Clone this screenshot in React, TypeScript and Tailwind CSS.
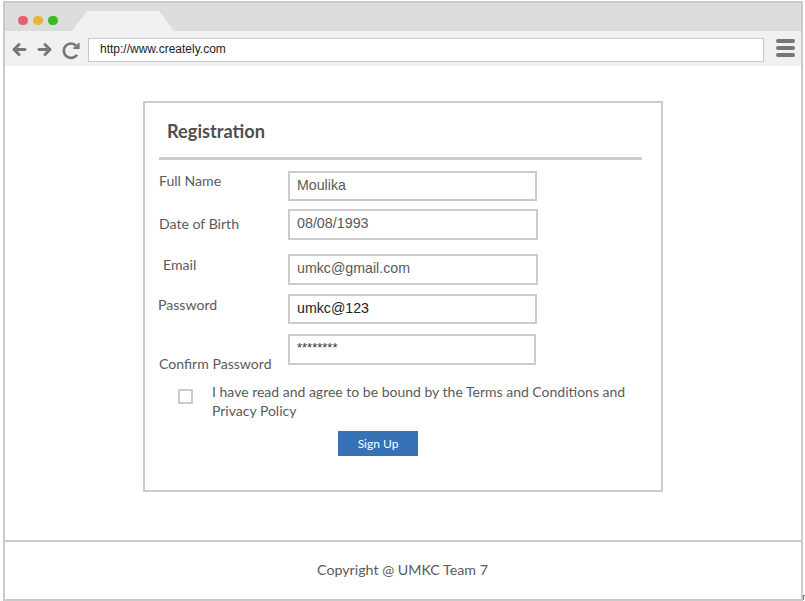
import React from "react";

type FieldProps = {
  label: string;
  value: string;
  type?: string;
  rowClass: string;
  labelClass: string;
  inputClass: string;
};

function Field({ label, value, type = "text", rowClass, labelClass, inputClass }: FieldProps) {
  return (
    <label className={`flex items-start ${rowClass}`}>
      <span className={`shrink-0 text-[14.1px] leading-5 whitespace-nowrap ${labelClass}`}>{label}</span>
      <div className={`shrink-0 border-2 border-[#cbcbcb] bg-white pl-[7px] font-['Liberation_Sans',sans-serif] leading-5 ${inputClass}`}>
        {type === "password" ? "*".repeat(value.length) : value}
      </div>
    </label>
  );
}

function BrowserBar() {
  return (
    <header>
      <div className="flex h-7 bg-[#dcdedb]">
        <div className="flex w-[67px] items-center gap-[5.500px] pt-[7px] pl-[13.300px]">
          <span className="size-[9.500px] rounded-full bg-[#e6616d]" />
          <span className="size-[9.500px] rounded-full bg-[#eab439]" />
          <span className="size-[9.500px] rounded-full bg-[#3cbb20]" />
        </div>
        <svg className="mt-2 h-5 w-[102px]" viewBox="0 0 102 20" fill="#f1f1f1">
          <path d="M0 20 L14.500 0.600 Q15 0 16 0 H86 Q87 0 87.500 0.600 L102 20 Z" />
        </svg>
      </div>
      <div className="flex h-[35px] items-start bg-[#f1f1f1]">
        <svg className="h-[35px] w-[83px] shrink-0" viewBox="0 0 83 35" fill="none" stroke="#777777">
          <g strokeWidth="3" strokeLinecap="round" strokeLinejoin="round">
            <path d="M20 18.500 H9.500 M14 13.500 L9 18.500 L14 23.500" />
            <path d="M34 18.500 H44.500 M40 13.500 L45 18.500 L40 23.500" />
          </g>
          <path d="M71.200 14.700 A7.200 7.200 0 1 0 72 23.700" strokeWidth="2.700" />
          <path d="M74.600 12 V18 H68.300 V16.500 L70.500 15.500 L72.600 13.500 V12 Z" fill="#777777" stroke="none" />
        </svg>
        <div className="mt-[7px] h-6 w-[676px] border border-[#c9c9c9] bg-white pl-[11px] font-['Liberation_Sans',sans-serif] text-[12px] leading-[21px] text-[#222222]">
          http://www.creately.com
        </div>
        <div className="mt-2 ml-3 flex w-[19px] flex-col gap-[3px]">
          <span className="h-1 rounded-full bg-[#777777]" />
          <span className="h-1 rounded-full bg-[#777777]" />
          <span className="h-1 rounded-full bg-[#777777]" />
        </div>
      </div>
    </header>
  );
}

export default function App() {
  return (
    <div className="flex h-[601px] w-[805px] items-end overflow-hidden bg-white pl-[3px] font-['Lato',sans-serif] text-[#5a5a5a]">
      <div className="flex h-[600px] w-[800px] shrink-0 flex-col border-2 border-[#cbcbcb]">
        <BrowserBar />
        <main className="h-[474px] pt-[35px] pl-[138px]">
          <form className="h-[391px] w-[520px] border-2 border-[#cbcbcb]">
            <h1 className="pt-4 pl-[22px] text-[18.200px] leading-6 font-bold text-[#505050]">Registration</h1>
            <div className="mt-[14px] ml-[14px] h-[3px] w-[483px] bg-[#cbcbcb]" />
            <Field label="Full Name" value="Moulika" rowClass="mt-[11px] pl-[14px]" labelClass="w-[129px]" inputClass="h-[30px] w-[249px] pt-[2px] text-[14.200px]" />
            <Field label="Date of Birth" value="08/08/1993" rowClass="mt-2 pl-[14px]" labelClass="w-[129px] pt-[5px]" inputClass="h-[31px] w-[250px] pt-[2px] text-[14.300px]" />
            <Field label="Email" value="umkc@gmail.com" rowClass="mt-[14px] pl-[18px]" labelClass="w-[125px] pt-[1px]" inputClass="h-[31px] w-[250px] pt-[2px] text-[14.200px]" />
            <Field label="Password" value="umkc@123" rowClass="mt-[9px] pl-[13px]" labelClass="w-[130px] pt-[1px]" inputClass="h-[30px] w-[249px] pt-[2px] text-[14.200px] text-[#222222]" />
            <Field label="Confirm Password" value="umkc@123" type="password" rowClass="mt-[10px] pl-[14px]" labelClass="w-[129px] pt-5" inputClass="h-[31px] w-[248px] pt-[2px] text-[13px] text-[#333333]" />
            <div className="flex items-start pl-[33px]">
              <span className="mt-[15px] size-[15px] shrink-0 border-2 border-[#cbcbcb]" />
              <p className="mt-2 ml-[19px] w-[430px] text-[14px] leading-[19px]">
                I have read and agree to be bound by the Terms and Conditions and
                <br />
                Privacy Policy
              </p>
            </div>
            <button type="button" className="mt-[11px] ml-[193px] block h-[25px] w-20 bg-[#3672b5] text-center text-[12px] leading-[25px] text-white">
              Sign Up
            </button>
          </form>
        </main>
        <footer className="flex-1 border-t-2 border-[#cbcbcb] pt-[18px] pr-[1px] text-center text-[14.250px] leading-5">
          Copyright @ UMKC Team 7
        </footer>
      </div>
      <span className="mb-[1px] h-[5px] w-[2px] shrink-0 border-t border-l border-[#777777]" />
    </div>
  );
}
